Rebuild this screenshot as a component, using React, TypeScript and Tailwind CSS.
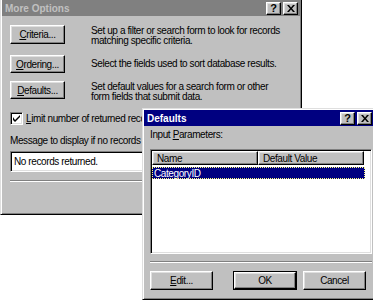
import type { ReactNode } from "react";

const bevel =
  "border border-t-white border-l-white border-r-black border-b-black shadow-[inset_-1px_-1px_#808080,inset_1px_1px_#dfdfdf]";
const sunken =
  "border border-t-[#808080] border-l-[#808080] border-r-white border-b-white shadow-[inset_1px_1px_#000,inset_-1px_-1px_#dfdfdf]";

function Btn({ children, className = "" }: { children: ReactNode; className?: string }) {
  return (
    <div className={`flex shrink-0 items-center justify-center bg-[#c0c0c0] text-black ${bevel} ${className}`}>
      {children}
    </div>
  );
}

function TitleButtons() {
  return (
    <div className="flex items-center">
      <div className={`flex h-[13px] w-[15px] items-center justify-center bg-[#c0c0c0] text-[11px] font-bold leading-none tracking-normal text-black ${bevel}`}>
        ?
      </div>
      <div className={`ml-[2px] flex h-[13px] w-[15px] items-center justify-center bg-[#c0c0c0] ${bevel}`}>
        <svg width="8" height="7" viewBox="0 0 8 7">
          <path d="M0 0h2l2 2.5 2-2.5h2l-3 3.5 3 3.5h-2l-2-2.5-2 2.5h-2l3-3.5z" fill="#000" />
        </svg>
      </div>
    </div>
  );
}

function Separator({ className = "" }: { className?: string }) {
  return <div className={`h-[2px] shrink-0 border-t border-t-[#808080] border-b border-b-white ${className}`} />;
}

function MoreOptions() {
  return (
    <div className="absolute left-0 top-0 flex h-[215px] w-[302px] flex-col border-l border-l-[#dfdfdf] border-r border-r-black border-b border-b-black bg-[#c0c0c0] pl-px pr-px shadow-[inset_1px_0_#fff,inset_-1px_-1px_#808080]">
      <div className="flex h-[16px] shrink-0 items-center justify-between bg-[#808080] pl-[3px] pr-[2px]">
        <span className="text-[10px] font-bold tracking-normal text-[#c0c0c0]">More Options</span>
        <TitleButtons />
      </div>

      <div className="flex flex-col pl-[8px] pr-[8px]">
        <div className="mt-[9px] flex h-[19px]">
          <Btn className="h-[19px] w-[55px]">
            <span><span className="underline">C</span>riteria...</span>
          </Btn>
          <div className="ml-[26px] mt-[1px] whitespace-nowrap leading-[10px]">
            Set up a filter or search form to look for records
            <br />
            matching specific criteria.
          </div>
        </div>

        <div className="mt-[11px] flex h-[18px] items-center">
          <Btn className="h-[18px] w-[55px]">
            <span><span className="underline">O</span>rdering...</span>
          </Btn>
          <div className="ml-[26px] whitespace-nowrap leading-[10px]">Select the fields used to sort database results.</div>
        </div>

        <div className="mt-[8px] flex h-[18px]">
          <Btn className="h-[18px] w-[55px]">
            <span><span className="underline">D</span>efaults...</span>
          </Btn>
          <div className="ml-[26px] mt-[1px] whitespace-nowrap leading-[10px]">
            Set default values for a search form or other
            <br />
            form fields that submit data.
          </div>
        </div>

        <div className="mt-[13px] flex h-[13px] items-center">
          <div className={`flex h-[13px] w-[13px] shrink-0 items-center justify-center bg-white ${sunken}`}>
            <svg width="7" height="7" viewBox="0 0 7 7">
              <path d="M0 2v3l2 2 5-5v-2l-5 5z" fill="#000" />
            </svg>
          </div>
          <span className="ml-[3px] whitespace-nowrap leading-[10px]">
            <span className="underline">L</span>imit number of returned records
          </span>
        </div>

        <div className="mt-[11px] h-[10px] whitespace-nowrap leading-[10px]">Message to display if no records</div>

        <div className={`mt-[5px] flex h-[21px] shrink-0 items-center bg-white pl-[3px] ${sunken}`}>No records returned.</div>

        <Separator className="mt-[8px]" />
      </div>
    </div>
  );
}

function Defaults() {
  return (
    <div className="absolute left-[142px] top-[108px] flex h-[192px] w-[234px] flex-col border-l border-l-[#dfdfdf] border-t border-t-[#dfdfdf] border-r border-r-black border-b border-b-black bg-[#c0c0c0] p-px shadow-[inset_1px_1px_#fff,inset_-1px_-1px_#808080]">
      <div className="flex h-[16px] shrink-0 items-center justify-between bg-[#000080] pl-[3px] pr-[2px]">
        <span className="text-[10px] font-bold tracking-normal text-white">Defaults</span>
        <TitleButtons />
      </div>

      <div className="flex flex-col pl-[6px] pr-[2px]">
        <div className="mt-[2px] leading-[14px]">
          Input <span className="underline">P</span>arameters:
        </div>

        <div className={`mt-[7px] flex h-[105px] flex-col bg-white p-px ${sunken}`}>
          <div className="flex h-[14px] bg-white">
            <div className={`flex w-[106px] items-center pl-[4px] ${bevel} bg-[#c0c0c0]`}>Name</div>
            <div className={`flex w-[106px] items-center pl-[4px] ${bevel} bg-[#c0c0c0]`}>Default Value</div>
          </div>
          <div className="mt-[2px] flex h-[12px] w-[213px] items-center bg-[#000080] pl-[2px] text-white outline-1 -outline-offset-1 outline-dotted outline-[#ffff80]">
            CategoryID
          </div>
        </div>

        <Separator className="mt-[7px]" />

        <div className="mt-[8px] flex">
          <Btn className="h-[19px] w-[63px]">
            <span><span className="underline">E</span>dit...</span>
          </Btn>
          <div className="ml-[20px] border border-black">
            <Btn className="h-[17px] w-[62px]">OK</Btn>
          </div>
          <Btn className="ml-[6px] h-[19px] w-[63px]">Cancel</Btn>
        </div>
      </div>
    </div>
  );
}

export default function App() {
  return (
    <div className="relative h-[300px] w-[373px] overflow-hidden bg-white font-['Liberation_Sans',sans-serif] text-[10px] tracking-[-0.4px] text-black">
      <MoreOptions />
      <Defaults />
    </div>
  );
}
